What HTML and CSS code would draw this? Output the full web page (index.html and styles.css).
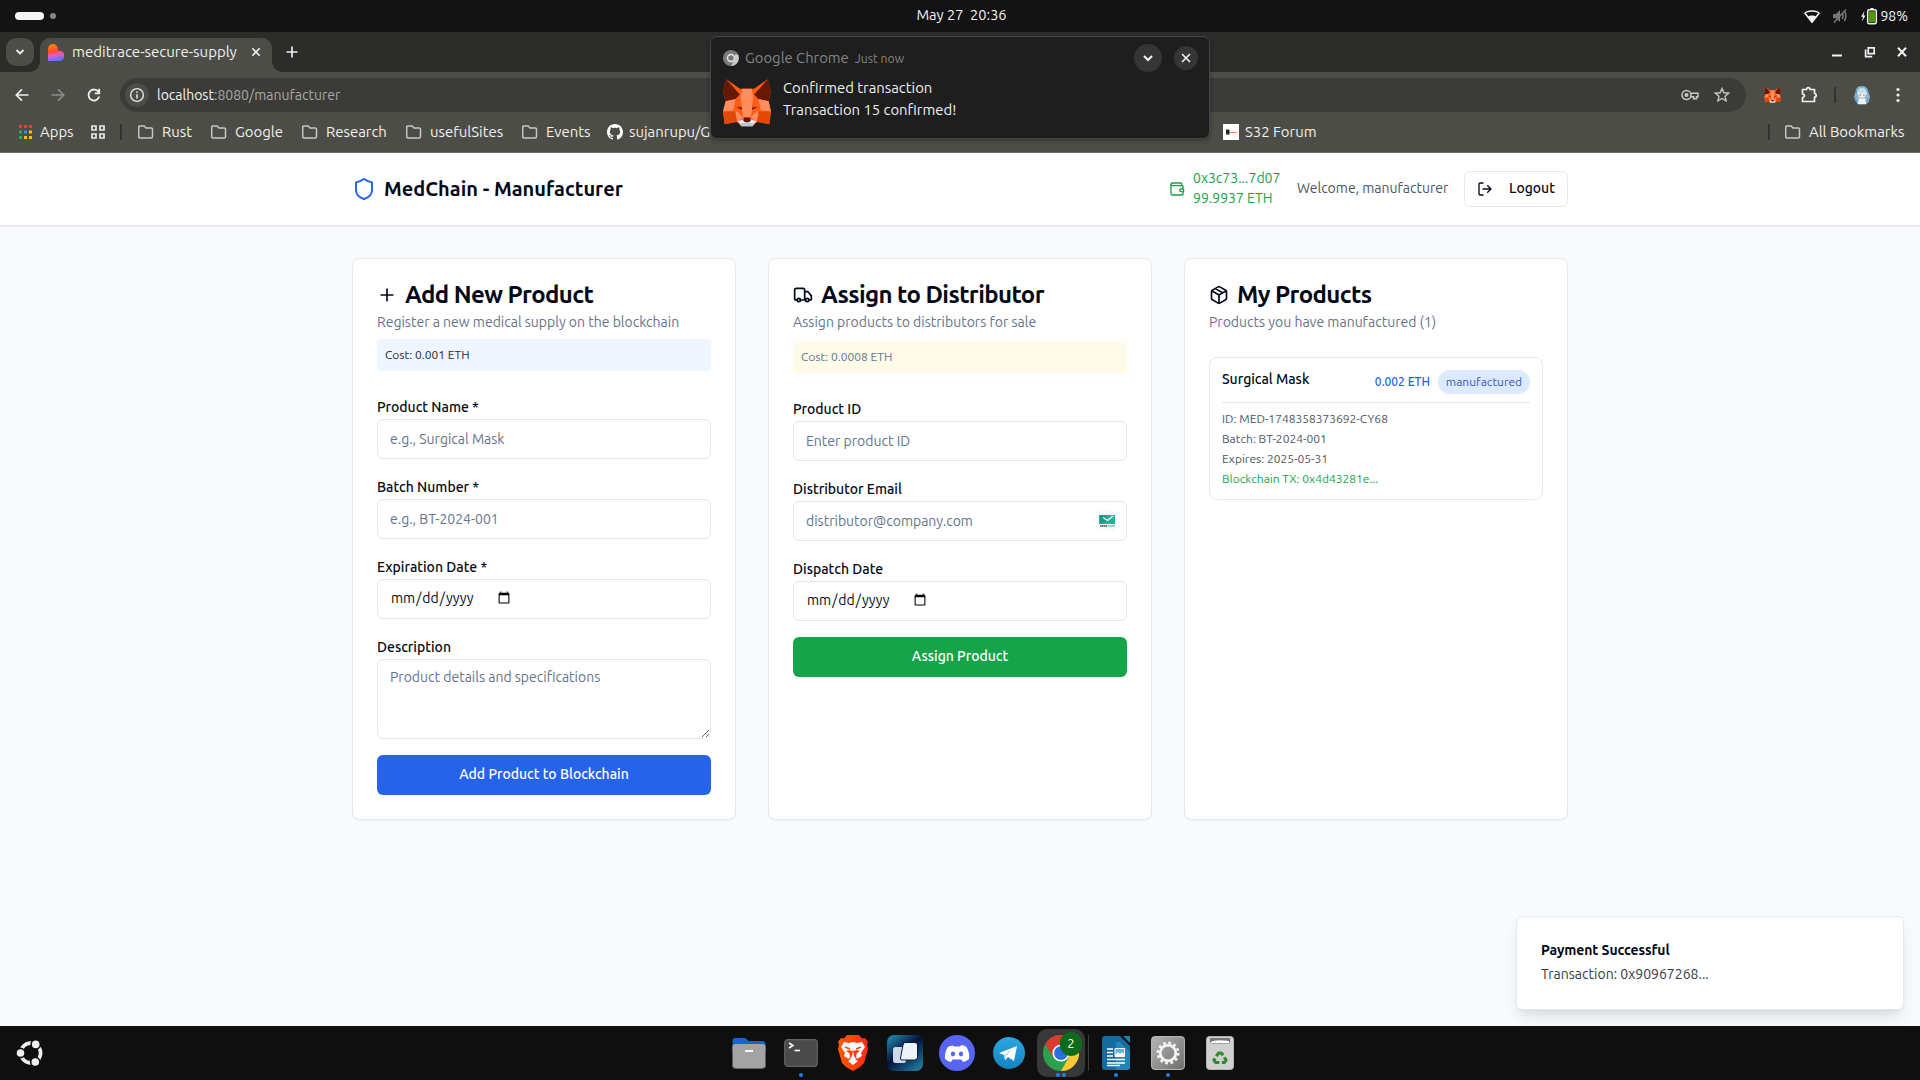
FILE: index.html
```html
<!DOCTYPE html>
<html lang="en">
<head>
<meta charset="utf-8">
<title>meditrace-secure-supply</title>
<link rel="stylesheet" href="styles.css">
</head>
<body>
<svg width="0" height="0" class="defs" aria-hidden="true">
  <symbol id="folder" viewBox="0 0 16 16"><path d="M1.5 2h4.7l1.8 1.9h5.3c.8 0 1.2.5 1.2 1.2v7.6c0 .7-.4 1.2-1.2 1.2H1.9c-.7 0-1.2-.5-1.2-1.2V3.2C.7 2.500 1 2 1.500 2z" fill="none" stroke="#c7c7c3" stroke-width="1.5"/></symbol>
  <symbol id="fox" viewBox="0 0 142 140">
    <path fill="#ff5c16" d="M10 0 50 28H92L132 0 142 35 135 65 142 95 137 133 102 125 88 138H54L40 125 5 133 0 95 8 65 0 35z"/>
    <path fill="#661800" d="M10 0 50 45 38 58 8 65 0 34zM132 0 92 45 104 58 135 65 142 34z"/>
    <path fill="#ff8d5d" d="M57 28H85L92 62 82 112H60L50 62zM8 65 38 58 30 92 0 95zM135 65 104 58 112 92 142 95zM38 92 60 112 42 128 36 100zM104 92 82 112 100 128 106 100z"/>
    <path fill="#ff5c16" d="M50 45 57 85 52 94 32 92 38 58zM92 45 85 85 90 94 110 92 104 58z"/>
    <path fill="#e34807" d="M0 95H36L42 126 5 133zM142 95H106L100 126 137 133zM38 82 56 80 55 90zM104 82 86 80 87 90z"/>
    <path fill="#661800" d="M42 82 56 84 54 91zM100 82 86 84 88 91z"/>
    <path fill="#e7ebf6" d="M44 124 60 119H82L98 124 87 139H55z"/>
    <path fill="#c0c4cd" d="M52 129H90L87 139H55z"/>
    <path fill="#661800" d="M62 113H80L82 123 76 127H66L60 123z"/>
  </symbol>
</svg>

<header class="topbar">
  <div class="workspaces"><i class="pill"></i><i class="dot"></i></div>
  <div class="clock">May 27&nbsp; 20:36</div>
  <div class="status">
    <svg width="16" height="16" viewBox="0 0 16 16"><path d="M1 5.200C3 2.300 13 2.300 15 5.200L8 14.300z" fill="none" stroke="#f2f2f2" stroke-width="1.500" stroke-linejoin="round"/><path d="M4 8.500c2-1.300 6-1.300 8 0L8 14.500z" fill="#f2f2f2"/></svg>
    <svg width="16" height="16" viewBox="0 0 16 16" fill="none" stroke="#777" stroke-width="1.500"><path d="M1 6h3l4-4v12L4 10H1z" fill="#777" stroke="none"/><path d="M10 5q2 3 0 6M12.300 3q3 5 0 10M2 14.500 14 1.500"/></svg>
    <div class="battery"><svg width="18" height="18" viewBox="0 0 18 18"><path d="M4.500 4 1 9.800h2L2 14.500 5.500 8.400h-2z" fill="#f2f2f2"/><path d="M10.500 1h3v1.500h-3z" fill="#f2f2f2"/><rect x="7.700" y="2.700" width="8.600" height="14" rx="1.500" fill="none" stroke="#f2f2f2" stroke-width="1.500"/><rect x="9" y="4.300" width="6" height="11" fill="#4e9a06"/></svg>98%</div>
  </div>
</header>

<section class="browser">
  <div class="tabs">
    <button class="tab-search"><svg width="12" height="12" viewBox="0 0 12 12"><path d="m2.500 4 3.500 3.500L9.500 4" fill="none" stroke="#eee" stroke-width="1.800"/></svg></button>
    <div class="tab">
      <svg width="16" height="17" viewBox="0 0 16 17"><defs><linearGradient id="fav" x1=".3" y1="0" x2=".5" y2="1"><stop offset="0" stop-color="#ff8a00"/><stop offset=".4" stop-color="#ff4b2b"/><stop offset=".65" stop-color="#e45cc0"/><stop offset="1" stop-color="#4b7bff"/></linearGradient></defs><path d="M0 5a5 5 0 0 1 10 0v1.500h1A5 5 0 0 1 11 17H0z" fill="url(#fav)"/></svg>
      <span class="tab-name">meditrace-secure-supply</span>
      <svg width="12" height="12" viewBox="0 0 12 12"><path d="m2.300 2.300 7.400 7.400m0-7.400-7.400 7.400" stroke="#eee" stroke-width="1.600"/></svg>
    </div>
    <svg class="newtab" width="14" height="14" viewBox="0 0 14 14"><path d="M7 1.500v11M1.500 7h11" stroke="#eee" stroke-width="1.700"/></svg>
    <div class="winctl">
      <svg width="12" height="12" viewBox="0 0 12 12"><path d="M1 9.500h10" stroke="#f2f2f2" stroke-width="2"/></svg>
      <svg width="12" height="12" viewBox="0 0 12 12" fill="none" stroke="#f2f2f2" stroke-width="1.700"><path d="M4.200 1.900h6v5.800h-6zM1.600 3.500v7.200h6.600"/></svg>
      <svg width="12" height="12" viewBox="0 0 12 12"><path d="m2 1.800 8 8.400m0-8.400-8 8.400" stroke="#f2f2f2" stroke-width="2"/></svg>
    </div>
  </div>
  <div class="toolbar">
    <div class="nav">
      <svg width="16" height="16" viewBox="0 0 16 16" fill="none" stroke="#f0f0ee" stroke-width="1.700"><path d="M14.500 8H2.500M8 2.300 2.300 8 8 13.700"/></svg>
      <svg width="16" height="16" viewBox="0 0 16 16" fill="none" stroke="#8b8b86" stroke-width="1.700"><path d="M1.500 8h12M8 2.300 13.700 8 8 13.700"/></svg>
      <svg width="16" height="16" viewBox="0 0 16 16" fill="none" stroke="#f0f0ee" stroke-width="1.800"><path d="M13.300 9.500A5.500 5.500 0 1 1 12.600 5"/><path d="M13.200 1.800v4.500H8.800" /></svg>
    </div>
    <div class="omnibox">
      <span class="info"><svg width="16" height="16" viewBox="0 0 16 16"><circle cx="8" cy="8" r="6.400" fill="none" stroke="#e8e8e6" stroke-width="1.400"/><path d="M8 7.200v4.200M8 4.400v1.600" stroke="#e8e8e6" stroke-width="1.500"/></svg></span>
      <span class="url"><b>localhost</b>:8080/manufacturer</span>
      <svg width="18" height="12" viewBox="0 0 18 12" fill="none" stroke="#c7c7c3" stroke-width="1.500"><circle cx="5.500" cy="6" r="4.500"/><circle cx="5.500" cy="6" r="1.300" fill="#c7c7c3"/><path d="M10 4.300h7v3.500h-1.500v2h-3v-2H9.500"/></svg>
      <svg width="16" height="16" viewBox="0 0 16 16"><path d="m8 1.500 1.900 4.300 4.700.4-3.600 3.100 1.100 4.600L8 11.500l-4.100 2.400L5 9.300 1.400 6.200l4.700-.4z" fill="none" stroke="#c7c7c3" stroke-width="1.400"/></svg>
    </div>
    <div class="exts">
      <svg class="ext-fox" width="17" height="16"><use href="#fox"/></svg>
      <svg width="18" height="18" viewBox="0 0 18 18"><path d="M2.500 3.500h4c0-2.500 3.500-2.500 3.500 0h4.500v4c2.200 0 2.200 3.500 0 3.500v4.500h-12v-4c2.500 0 2.500-3.500 0-3.500z" fill="none" stroke="#f0f0ee" stroke-width="1.700" stroke-linejoin="round"/></svg>
      <i class="vsep"></i>
      <svg class="avatar" width="20" height="20" viewBox="0 0 20 20"><path d="M10 1C5 1 4 4 3.500 7L2 12l1.500 4L6 19.500h8l3-3 1-5L16.500 7C16 4 14 1 10 1z" fill="#8db6cd"/><path d="M5.500 6c2-4 7-4 9 0l1 3.500H4.500z" fill="#bfe2f0"/><path d="M6.500 8h7v3.500L10 13.500 6.500 11.500z" fill="#f8e8e4"/><path d="m7 13 3 1 3-1 1 6H6z" fill="#eef2fa"/><path d="M3 12l2 5M17 12l-2 5M5 5l-1 5M15 4l1.500 6" stroke="#6593b3"/><path d="M7.600 10h1.200M11.300 10h1.200" stroke="#456" stroke-width="1.200"/></svg>
      <svg width="4" height="16" viewBox="0 0 4 16" fill="#f0f0ee"><circle cx="2" cy="2.500" r="1.600"/><circle cx="2" cy="8" r="1.600"/><circle cx="2" cy="13.500" r="1.600"/></svg>
    </div>
  </div>
  <nav class="bookmarks">
    <a class="bm apps"><svg width="13" height="14" viewBox="0 0 13 14"><g fill="#ea4335"><path d="M0 0h3v3H0zM5 0h3v3H5zM10 0h3v3h-3z"/></g><path d="M0 5.500h3v3H0z" fill="#34a853"/><path d="M5 5.500h3v3H5z" fill="#4285f4"/><path d="M10 5.500h3v3h-3zM5 11h3v3H5zM10 11h3v3h-3z" fill="#fbbc04"/><path d="M0 11h3v3H0z" fill="#34a853"/></svg>Apps</a>
    <a class="bm"><svg width="14" height="14" viewBox="0 0 14 14" fill="none" stroke="#e8e8e6" stroke-width="1.700"><path d="M1 1h4v4H1zM9 1h4v4H9zM1 9h4v4H1zM9 9h4v4H9z"/></svg></a>
    <i class="vsep"></i>
    <a class="bm"><svg width="16" height="16"><use href="#folder"/></svg>Rust</a>
    <a class="bm"><svg width="16" height="16"><use href="#folder"/></svg>Google</a>
    <a class="bm"><svg width="16" height="16"><use href="#folder"/></svg>Research</a>
    <a class="bm"><svg width="16" height="16"><use href="#folder"/></svg>usefulSites</a>
    <a class="bm"><svg width="16" height="16"><use href="#folder"/></svg>Events</a>
    <a class="bm tight"><svg width="16" height="16" viewBox="0 0 16 16"><path fill="#fff" d="M8 0C3.580 0 0 3.580 0 8c0 3.540 2.290 6.530 5.470 7.590.4.070.55-.17.55-.38 0-.19-.01-.82-.01-1.490-2.010.37-2.530-.49-2.690-.94-.09-.23-.48-.94-.82-1.130-.28-.15-.68-.52-.01-.53.63-.01 1.080.58 1.230.82.72 1.210 1.870.87 2.330.66.07-.52.28-.87.51-1.070-1.780-.2-3.640-.89-3.640-3.950 0-.87.31-1.590.82-2.150-.08-.2-.36-1.020.08-2.120 0 0 .67-.21 2.200.82.64-.18 1.320-.27 2-.27s1.360.09 2 .27c1.530-1.040 2.200-.82 2.200-.82.44 1.100.16 1.920.08 2.120.51.56.82 1.270.82 2.150 0 3.070-1.870 3.750-3.650 3.950.29.25.54.73.54 1.480 0 1.070-.01 1.930-.01 2.200 0 .21.15.46.55.38A8.010 8.010 0 0 0 16 8c0-4.420-3.580-8-8-8z"/></svg>sujanrupu/G</a>
    <a class="bm tight"><svg width="16" height="16" viewBox="0 0 16 16"><path fill="#fff" d="M0 0h16v16H0z"/><path fill="#222" d="M3 5.500h3.500v5H3z"/><path d="M7 8.500h7" stroke="#f08040"/></svg>S32 Forum</a>
    <i class="vsep"></i>
    <a class="bm"><svg width="16" height="16"><use href="#folder"/></svg>All Bookmarks</a>
  </nav>
</section>

<main class="page">
  <header class="site">
    <div class="site-inner">
      <div class="brand"><svg width="24" height="24" viewBox="0 0 24 24" fill="none" stroke="#2563eb" stroke-width="2" stroke-linecap="round" stroke-linejoin="round"><path d="M20 13c0 5-3.500 7.500-7.660 8.950a1 1 0 0 1-.67-.01C7.500 20.500 4 18 4 13V6a1 1 0 0 1 1-1c2 0 4.500-1.200 6.240-2.720a1.170 1.170 0 0 1 1.520 0C14.510 3.810 17 5 19 5a1 1 0 0 1 1 1z"/></svg><h1>MedChain - Manufacturer</h1></div>
      <div class="account">
        <div class="wallet"><svg width="16" height="16" viewBox="0 0 24 24" fill="none" stroke="currentColor" stroke-width="2" stroke-linecap="round" stroke-linejoin="round"><path d="M19 7V4a1 1 0 0 0-1-1H5a2 2 0 0 0 0 4h15a1 1 0 0 1 1 1v4h-3a2 2 0 0 0 0 4h3a1 1 0 0 0 1-1v-2a1 1 0 0 0-1-1"/><path d="M3 5v14a2 2 0 0 0 2 2h15a1 1 0 0 0 1-1v-4"/></svg><div><p>0x3c73...7d07</p><p>99.9937 ETH</p></div></div>
        <span class="welcome">Welcome, manufacturer</span>
        <button class="logout"><svg width="16" height="16" viewBox="0 0 24 24" fill="none" stroke="currentColor" stroke-width="2" stroke-linecap="round" stroke-linejoin="round"><path d="M9 21H5a2 2 0 0 1-2-2V5a2 2 0 0 1 2-2h4M16 17l5-5-5-5M21 12H9"/></svg><span>Logout</span></button>
      </div>
    </div>
  </header>

  <div class="cards">
    <section class="card">
      <h2><svg width="20" height="20" viewBox="0 0 24 24" fill="none" stroke="currentColor" stroke-width="2" stroke-linecap="round"><path d="M5 12h14M12 5v14"/></svg>Add New Product</h2>
      <p class="desc">Register a new medical supply on the blockchain</p>
      <p class="cost blue">Cost: 0.001 ETH</p>
      <form>
        <div><label>Product Name *</label><input type="text" placeholder="e.g., Surgical Mask"></div>
        <div><label>Batch Number *</label><input type="text" placeholder="e.g., BT-2024-001"></div>
        <div><label>Expiration Date *</label><input type="date"></div>
        <div><label>Description</label><textarea placeholder="Product details and specifications"></textarea></div>
        <button type="button" class="btn primary">Add Product to Blockchain</button>
      </form>
    </section>
    <section class="card">
      <h2><svg width="20" height="20" viewBox="0 0 24 24" fill="none" stroke="currentColor" stroke-width="2" stroke-linecap="round" stroke-linejoin="round"><path d="M14 18V6a2 2 0 0 0-2-2H4a2 2 0 0 0-2 2v11a1 1 0 0 0 1 1h2M15 18H9M19 18h2a1 1 0 0 0 1-1v-3.650a1 1 0 0 0-.22-.624l-3.480-4.350A1 1 0 0 0 17.520 8H14"/><circle cx="17" cy="18" r="2"/><circle cx="7" cy="18" r="2"/></svg>Assign to Distributor</h2>
      <p class="desc">Assign products to distributors for sale</p>
      <p class="cost yellow">Cost: 0.0008 ETH</p>
      <form>
        <div><label>Product ID</label><input type="text" placeholder="Enter product ID"></div>
        <div class="email"><label>Distributor Email</label><input type="text" placeholder="distributor@company.com"><svg class="tempmail" width="20" height="20" viewBox="0 0 20 20"><path fill="#fafafa" d="M0 0h20v20H0z"/><rect x="2.300" y="4" width="15.700" height="9" fill="#1fb394"/><path fill="#179c8c" d="M2.300 4h7l1 6-8 3z"/><path d="m6.200 6.500 4.300 3 5.500-4.500" fill="none" stroke="#fff" stroke-width="1.200"/><path d="M3 15h7.500" stroke="#2f4856" stroke-width="1.500" stroke-dasharray="1.500 .4"/><path d="M11 15h7" stroke="#5cd6b4" stroke-width="1.500"/></svg></div>
        <div><label>Dispatch Date</label><input type="date"></div>
        <button type="button" class="btn success">Assign Product</button>
      </form>
    </section>
    <section class="card">
      <h2><svg width="20" height="20" viewBox="0 0 24 24" fill="none" stroke="currentColor" stroke-width="2" stroke-linecap="round" stroke-linejoin="round"><path d="M11 21.730a2 2 0 0 0 2 0l7-4A2 2 0 0 0 21 16V8a2 2 0 0 0-1-1.730l-7-4a2 2 0 0 0-2 0l-7 4A2 2 0 0 0 3 8v8a2 2 0 0 0 1 1.730zM12 22V12M3.300 7 12 12l8.700-5M7.500 4.270l9 5.150"/></svg>My Products</h2>
      <p class="desc">Products you have manufactured (1)</p>
      <article class="product">
        <div class="product-head"><h3>Surgical Mask</h3><span class="price">0.002 ETH</span><span class="badge">manufactured</span></div>
        <div class="details"><p>ID: MED-1748358373692-CY68</p><p>Batch: BT-2024-001</p><p>Expires: 2025-05-31</p><p class="tx">Blockchain TX: 0x4d43281e...</p></div>
      </article>
    </section>
  </div>

  <aside class="toast"><strong>Payment Successful</strong><p>Transaction: 0x90967268...</p></aside>
</main>

<footer class="dock">
  <svg class="ubuntu" width="28" height="28" viewBox="0 0 28 28"><circle cx="14.700" cy="14" r="9.900" fill="none" stroke="#f2f2f2" stroke-width="3.600"/><g fill="#f2f2f2" stroke="#0f0f0f" stroke-width="1.600"><circle cx="4.500" cy="14" r="4.600"/><circle cx="19.700" cy="5.400" r="4.600"/><circle cx="19.300" cy="23" r="4.600"/></g></svg>
  <div class="apps-row">
    <div class="app"><svg width="34" height="32" viewBox="0 0 34 32"><path d="M.5 4c0-2 1-3 3-3h10l3 3h14c2 0 3 1 3 3v8H.5z" fill="#1467c8"/><rect x=".5" y="7" width="33" height="24" rx="3" fill="#a3a3a3"/><path d="M.5 29q0 2.500 3 2.500h27q3 0 3-2.500" fill="none" stroke="#666"/><path d="M13 14h8" stroke="#fff" stroke-width="2"/></svg></div>
    <div class="app"><svg width="34" height="28" viewBox="0 0 34 28"><rect x=".7" y=".7" width="32.600" height="26.600" rx="3" fill="#4a4a4a" stroke="#636363" stroke-width="1.200"/><path d="m5 4 4 2.500L5 9M10.500 11.500h5.500" fill="none" stroke="#fff" stroke-width="1.500"/></svg><i class="run"></i></div>
    <div class="app"><svg width="32" height="36" viewBox="0 0 32 36"><defs><linearGradient id="br"><stop stop-color="#ff5a00"/><stop offset="1" stop-color="#ff2a1a"/></linearGradient></defs><path d="M10 0h12l3 3.500 3-.5 3 4-1 3 1 4-4 14-4 4-7 4-7-4-4-4L1 14l1-4-1-3 3-4 3 .5z" fill="url(#br)"/><path fill="#fff" d="m7 7 5 1 4-1 4 1 5-1 3 5-4 6 1 3-5 3-1-3 1-3 3-2-3-1-4 1 1 5 2 3-3 3-3-3 2-3 1-5-4-1-3 1 3 2 1 3-1 3-5-3 1-3-4-6zM11 26l5-3 5 3-5 4z"/><path d="m8 12 5 2M24 12l-5 2" stroke="#ff4510" stroke-width="1.500"/></svg></div>
    <div class="app"><svg width="36" height="36" viewBox="0 0 36 36"><defs><linearGradient id="cd" x1="0" y1="0" x2=".8" y2="1"><stop stop-color="#2597bb"/><stop offset=".5" stop-color="#03123c"/><stop offset="1" stop-color="#1d7898"/></linearGradient></defs><rect width="36" height="36" rx="7" fill="url(#cd)"/><rect x="6" y="12" width="13" height="16" rx="2.500" fill="#cfd8e8"/><path d="M18 7.500h10q2.500 0 2.500 2.500v12q0 3-3 3H15q-2 0-1.500-2L16 10q.3-2.500 2-2.500z" fill="#eef2f9" stroke="#061a45"/></svg></div>
    <div class="app"><svg width="36" height="36" viewBox="0 0 36 36"><circle cx="18" cy="18" r="18" fill="#5865f2"/><path fill="#fff" d="M13.500 10.500 15 11.500h6l1.500-1.500q3 .5 5 2 3.500 6 2.500 12-3 2.500-6 3l-1.500-2.500h-9L12 27q-3-.5-6-3Q5.500 17 9 11.700z"/><g fill="#5865f2"><ellipse cx="14" cy="19" rx="2.100" ry="2.400"/><ellipse cx="22" cy="19" rx="2.100" ry="2.400"/></g></svg></div>
    <div class="app"><svg width="32" height="32" viewBox="0 0 32 32"><defs><linearGradient id="tg" x2="0" y2="1"><stop stop-color="#2ca6e0"/><stop offset="1" stop-color="#1483c2"/></linearGradient></defs><circle cx="16" cy="16" r="16" fill="url(#tg)"/><path fill="#fff" d="m6 16 18-7-3 15-6-4-3 3-1-5z"/><path d="m11 18 9-6-7 7-1 4z" fill="#b9d9ec"/></svg></div>
    <div class="app active"><svg width="36" height="36" viewBox="0 0 36 36"><circle cx="18" cy="18" r="18" fill="#2da04c"/><path fill="#dc3a30" d="M2.400 9A18 18 0 0 1 33.600 9H18l-7.800 13.500z"/><path fill="#fcc934" d="M33.600 9A18 18 0 0 1 18 36l7.800-13.500L18 9z"/><circle cx="18" cy="18" r="8.600" fill="#fff"/><circle cx="18" cy="18" r="6.900" fill="#2a6fe0"/></svg><span class="count">2</span><i class="run two"></i></div>
    <i class="dock-sep"></i>
    <div class="app"><svg width="28" height="34" viewBox="0 0 28 34"><path d="M3 0h15l10 10v21q0 3-3 3H3q-3 0-3-3V3q0-3 3-3z" fill="#136b9e"/><path d="M14 6h4l10 10v15q0 3-3 3H14z" fill="#2384b6"/><path d="M21 0h7v7z" fill="#237fae"/><path d="M5 13h6M5 16.500h6M5 20h6M5 23.500h18M5 27h18M5 29.500h13" stroke="#fff" stroke-width="1.500"/><rect x="12.500" y="12" width="10.500" height="9" rx="1" fill="#fff"/><path d="M13.500 13h8.500v5l-2-2-2 2-2-2-2.500 3z" fill="#55b5e8"/></svg><i class="run"></i></div>
    <div class="app"><svg width="34" height="34" viewBox="0 0 34 34"><defs><linearGradient id="st" x2="1" y2="1"><stop stop-color="#b5b5b5"/><stop offset="1" stop-color="#6e6e6e"/></linearGradient></defs><rect x=".6" y=".6" width="32.800" height="32.800" rx="3" fill="url(#st)" stroke="#bdbdbd"/><circle cx="17" cy="17" r="10.200" fill="none" stroke="#f5f5f2" stroke-width="2.600" stroke-dasharray="2.700 2.640"/><circle cx="17" cy="17" r="7.800" fill="none" stroke="#f5f5f2" stroke-width="2.800"/></svg><i class="run"></i></div>
    <div class="app"><svg width="28" height="34" viewBox="0 0 28 34"><rect x=".5" y=".5" width="27" height="33" rx="3" fill="#d0d0d0" stroke="#b4b4b4"/><path d="M4 2h20v3.500q0 2-2 2H6q-2 0-2-2z" fill="#777"/><path d="M5 6q4-3 18-1v2H5z" fill="#fff"/><path d="M12.500 17h3L20 24l-1.500 2.500h-9L8 24z" fill="none" stroke="#2e8b2e" stroke-width="3.200" stroke-linejoin="round" stroke-dasharray="8.700 2.500" stroke-dashoffset="3"/></svg></div>
  </div>
</footer>

<aside class="notification">
  <div class="note-head">
    <svg width="16" height="16" viewBox="0 0 16 16"><circle cx="8" cy="8" r="8" fill="#7a7a7a"/><path d="M15 4.500A8 8 0 0 1 8 16l4-7V4.500z" fill="#c9c9c9"/><circle cx="8" cy="8" r="3.500" fill="#777" stroke="#e8e8e8" stroke-width="1.400"/></svg>
    <span class="note-app">Google Chrome</span><span class="note-time">Just now</span>
    <button class="round big"><svg width="12" height="12" viewBox="0 0 12 12"><path d="m2 4 4 4 4-4" fill="none" stroke="#f2f2f2" stroke-width="2"/></svg></button>
    <button class="round"><svg width="12" height="12" viewBox="0 0 12 12"><path d="m2 2 8 8m0-8-8 8" stroke="#f2f2f2" stroke-width="1.600"/></svg></button>
  </div>
  <div class="note-body"><svg width="48" height="48"><use href="#fox"/></svg><div><p>Confirmed transaction</p><p>Transaction 15 confirmed!</p></div></div>
</aside>
</body>
</html>
```
FILE: styles.css
```css
* { box-sizing: border-box; margin: 0; padding: 0; }
body {
  width: 1920px; height: 1080px; overflow: hidden;
  display: flex; flex-direction: column; position: relative;
  font-family: Ubuntu, "Noto Sans", sans-serif; font-size: 14px; color: #020817;
}
svg { display: block; flex: none; }
.defs { position: absolute; }
button { font: inherit; border: 0; background: none; letter-spacing: inherit; }

/* Desktop panel */
.topbar {
  height: 32px; background: #131313; color: #f2f2f2; flex: none;
  display: grid; grid-template-columns: 1fr auto 1fr; align-items: center;
  padding: 0 12px 0 15px; font-size: 14.600px; line-height: 20px;
}
.workspaces { display: flex; align-items: center; gap: 6px; }
.pill { width: 29px; height: 8px; border-radius: 4px; background: #f5f5f5; }
.dot { width: 6px; height: 6px; border-radius: 50%; background: #868686; }
.clock { padding-bottom: 2px; }
.status { display: flex; justify-content: flex-end; align-items: center; gap: 12px; }
.battery { display: flex; align-items: center; gap: 2px; font-size: 14px; }

/* Browser chrome */
.browser { height: 121px; flex: none; background: #4d4d48; color: #f0f0ee; font-size: 14.900px; line-height: 20px; border-bottom: 1px solid #6d6d68; }
.tabs { height: 40px; background: #2c2c2b; display: flex; align-items: center; padding: 0 12px 0 6px; }
.tab-search { width: 28px; height: 28px; border-radius: 10px; background: #4d4d48; display: grid; place-items: center; }
.tab {
  width: 232px; height: 34px; margin-left: 6px; align-self: flex-end; position: relative;
  border-radius: 10px 10px 0 0; background: #4d4d48;
  display: flex; align-items: center; padding: 0 10px 6px 8px; gap: 8px;
}
.tab::before, .tab::after { content: ""; position: absolute; bottom: 0; width: 10px; height: 10px; }
.tab::before { left: -10px; background: radial-gradient(circle at 0 0, transparent 9.500px, #4d4d48 10px); }
.tab::after { right: -10px; background: radial-gradient(circle at 100% 0, transparent 9.500px, #4d4d48 10px); }
.tab-name { flex: 1; white-space: nowrap; font-size: 15px; }
.newtab { margin-left: 13px; }
.winctl { margin-left: auto; display: flex; gap: 20.500px; }
.toolbar { height: 41px; display: flex; align-items: center; padding: 5px 20px 0 14px; }
.nav { width: 106px; display: flex; gap: 20px; }
.omnibox { width: 1626px; height: 34px; border-radius: 17px; background: #3b3b39; display: flex; align-items: center; padding: 0 16px 0 5px; }
.info { width: 24px; height: 24px; border-radius: 50%; background: #4d4d48; display: grid; place-items: center; margin-right: 8px; }
.url { flex: 1; color: #a9a9a6; font-size: 14px; }
.url b { font-weight: 400; color: #f5f5f5; }
.omnibox > svg + svg { margin-left: 15px; }
.exts { margin-left: auto; display: flex; align-items: center; gap: 16px; }
.ext-fox { margin-right: 3px; }
.avatar { margin-right: 8px; }
.vsep { width: 2px; height: 16px; background: #32322f; justify-self: start; }
.bookmarks {
  height: 38px; display: grid; align-items: center; padding-left: 19px;
  grid-template-columns: 72px 29px 18px 73px 91px 104px 116px 85px 616px 544.500px 17.500px 1fr;
}
.bm { display: flex; align-items: center; gap: 8px; white-space: nowrap; }
.bm.tight { gap: 6px; }

/* Notification bubble */
.notification {
  position: absolute; left: 710px; top: 36px; width: 500px; height: 103px; z-index: 5;
  background: #1e1e1e; border: 1px solid #454545; border-radius: 7px; box-shadow: 0 2px 5px rgba(0,0,0,.3);
  color: #f0f0ee; padding: 7px 11px 0 12px; font-size: 14.850px;
}
.note-head { height: 28px; display: flex; align-items: center; }
.note-app { color: #858585; margin: 0 6px; font-size: 14.800px; padding-bottom: 1px; }
.note-time { color: #858585; font-size: 12.200px; flex: 1; }
.round { width: 24px; height: 24px; border-radius: 50%; background: #353535; display: grid; place-items: center; }
.round.big { width: 28px; height: 28px; margin-right: 12px; }
.note-body { display: flex; gap: 12px; padding-top: 7px; line-height: 22px; }
.note-body div { margin-top: -2px; }

/* Web page */
.page { flex: 1; min-height: 0; background: #f9fafb; line-height: 20px; position: relative; }
.site { height: 73px; background: #fff; border-bottom: 1px solid #e5e7eb; box-shadow: 0 1px 2px rgba(0,0,0,.05); }
.site-inner { width: 1216px; height: 72px; margin: 0 auto; display: flex; justify-content: space-between; align-items: center; }
.brand, .account, .wallet { display: flex; align-items: center; gap: 8px; }
h1 { font-size: 20px; line-height: 28px; font-weight: 600; }
.account { gap: 16px; }
.wallet { color: #16a34a; width: 112px; }
.wallet div, .welcome, .logout span { padding-bottom: 2px; }
.welcome { color: #4b5563; width: 151px; white-space: nowrap; }
.logout { width: 104px; height: 36px; border: 1px solid #e2e8f0; border-radius: 6px; display: flex; align-items: center; gap: 16px; padding: 0 12px; font-weight: 500; background: #fff; color: #020817; }
.cards { width: 1216px; margin: 32px auto 0; display: grid; grid-template-columns: repeat(3, 1fr); gap: 32px; }
.card { height: 562px; background: #fff; border: 1px solid #e2e8f0; border-radius: 8px; box-shadow: 0 1px 2px rgba(0,0,0,.05); padding: 24px; }
h2 { display: flex; align-items: center; gap: 8px; height: 24px; font-size: 24px; line-height: 24px; font-weight: 600; letter-spacing: -.600px; }
.desc { color: #64748b; margin-top: 5px; height: 21px; }
.cost { height: 32px; border-radius: 4px; padding: 8px; font-size: 12px; line-height: 16px; margin-top: 6px; }
.blue { background: #eff6ff; color: #1f2937; }
.yellow { background: #fefce8; color: #64748b; margin-top: 8px; }
form { display: grid; gap: 16px; margin-top: 24px; }
label { display: block; height: 24px; line-height: 24px; font-weight: 500; }
input, textarea {
  display: flex; width: 100%; height: 40px; border: 1px solid #e2e8f0; border-radius: 6px; background: #fff;
  padding: 8px 12px; font: inherit; line-height: 20px; color: #020817; outline: 0;
}
input[type="date"] { padding-bottom: 10px; padding-top: 7px; }
textarea { height: 80px; resize: vertical; padding-top: 7px; }
::placeholder { color: #64748b; opacity: 1; }
.email { position: relative; }
.tempmail { position: absolute; right: 10px; top: 34px; }
.btn { height: 40px; border-radius: 6px; color: #fff; font-weight: 500; padding-bottom: 2px; }
.primary { background: #2563eb; }
.success { background: #16a34a; }
.product { margin-top: 24px; height: 143px; border: 1px solid #e2e8f0; border-radius: 8px; padding: 12px; }
.product-head { display: flex; align-items: center; height: 33px; padding-bottom: 8px; border-bottom: 1px solid #e2e8f0; }
h3 { font-size: 14px; font-weight: 500; flex: 1; align-self: flex-start; line-height: 18px; }
.price { color: #2563eb; font-weight: 500; font-size: 12px; margin-right: 8px; padding-bottom: 1px; }
.badge { width: 92px; height: 24px; border-radius: 12px; background: #dbeafe; color: #3b56b8; font-size: 12px; line-height: 23px; text-align: center; }
.details { display: grid; gap: 4px; padding-top: 8px; font-size: 12px; line-height: 16px; color: #4b5563; }
.tx { color: #16a34a; }
.toast { position: absolute; right: 16px; bottom: 16px; width: 388px; height: 94px; background: #fff; border: 1px solid #e2e8f0; border-radius: 6px; padding: 23px 24px; box-shadow: 0 10px 15px -3px rgba(0,0,0,.1), 0 4px 6px -4px rgba(0,0,0,.1); }
.toast strong { display: block; font-weight: 600; letter-spacing: -.080px; }
.toast p { margin-top: 4px; color: #353a46; }

/* Dock */
.dock { height: 54px; flex: none; background: #0f0f0f; position: relative; display: flex; align-items: center; padding-left: 16px; }
.apps-row { display: flex; align-items: center; margin-left: 679px; }
.app { width: 52px; height: 54px; display: grid; place-items: center; position: relative; }
.app svg { position: relative; }
.active::before { content: ""; position: absolute; left: 2px; top: 3px; width: 48px; height: 48px; border-radius: 10px; background: #383838; }
.run { position: absolute; bottom: 3px; left: 24px; width: 4px; height: 4px; border-radius: 50%; background: #1c80ec; }
.run.two { left: 21px; box-shadow: 6px 0 #1c80ec; }
.count { position: absolute; right: 5px; top: 6px; width: 22px; height: 24px; border-radius: 12px; background: #0f6b1c; color: #fff; font-size: 13px; line-height: 23px; text-align: center; }
.dock-sep { width: 1px; height: 36px; background: #3c3c3c; margin: 0 1px; }
```
